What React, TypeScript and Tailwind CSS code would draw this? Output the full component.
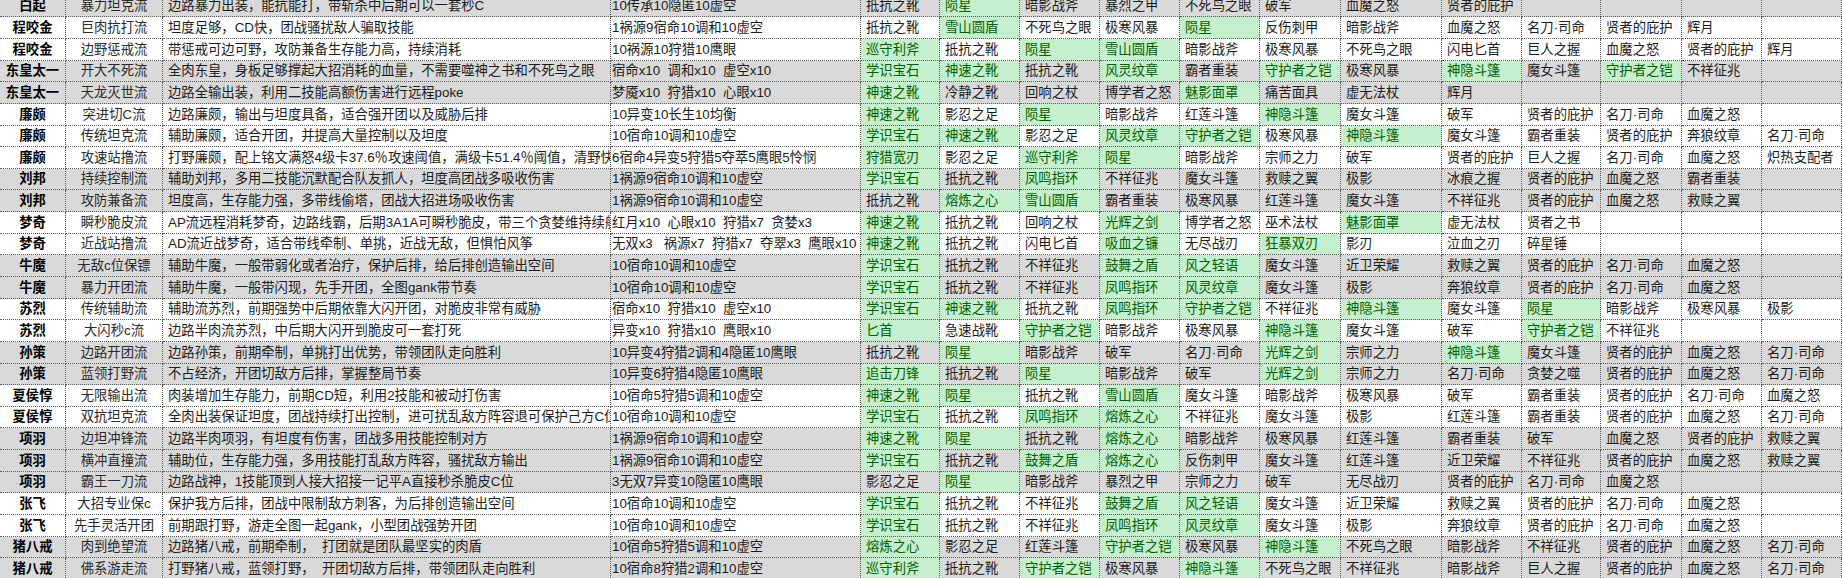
type Row = [string, string, string, string, string[]]

// items: a leading * marks the green "good" highlight
const rows: Row[] = [
  ['白起', '暴力坦克流', '边路暴力出装，能抗能打，带斩杀中后期可以一套秒C', '10传承10隐匿10虚空', ['抵抗之靴', '*陨星', '暗影战斧', '暴烈之甲', '不死鸟之眼', '破军', '血魔之怒', '贤者的庇护', '', '', '', '']],
  ['程咬金', '巨肉抗打流', '坦度足够，CD快，团战骚扰敌人骗取技能', '1祸源9宿命10调和10虚空', ['抵抗之靴', '*雪山圆盾', '不死鸟之眼', '极寒风暴', '*陨星', '反伤刺甲', '暗影战斧', '血魔之怒', '名刀·司命', '贤者的庇护', '辉月', '']],
  ['程咬金', '边野惩戒流', '带惩戒可边可野，攻防兼备生存能力高，持续消耗', '10祸源10狩猎10鹰眼', ['*巡守利斧', '抵抗之靴', '*陨星', '*雪山圆盾', '暗影战斧', '极寒风暴', '不死鸟之眼', '闪电匕首', '巨人之握', '血魔之怒', '贤者的庇护', '辉月']],
  ['东皇太一', '开大不死流', '全肉东皇，身板足够撑起大招消耗的血量，不需要噬神之书和不死鸟之眼', '宿命x10  调和x10  虚空x10', ['*学识宝石', '*神速之靴', '抵抗之靴', '*风灵纹章', '霸者重装', '*守护者之铠', '极寒风暴', '*神隐斗篷', '魔女斗篷', '*守护者之铠', '不祥征兆', '']],
  ['东皇太一', '天龙灭世流', '边路全输出装，利用二技能高额伤害进行远程poke', '梦魇x10  狩猎x10  心眼x10', ['*神速之靴', '冷静之靴', '回响之杖', '博学者之怒', '*魅影面罩', '痛苦面具', '虚无法杖', '辉月', '', '', '', '']],
  ['廉颇', '突进切C流', '边路廉颇，输出与坦度具备，适合强开团以及威胁后排', '10异变10长生10均衡', ['*神速之靴', '影忍之足', '*陨星', '暗影战斧', '红莲斗篷', '*神隐斗篷', '魔女斗篷', '破军', '贤者的庇护', '名刀·司命', '血魔之怒', '']],
  ['廉颇', '传统坦克流', '辅助廉颇，适合开团，并提高大量控制以及坦度', '10宿命10调和10虚空', ['*学识宝石', '*神速之靴', '影忍之足', '*风灵纹章', '*守护者之铠', '极寒风暴', '*神隐斗篷', '魔女斗篷', '霸者重装', '贤者的庇护', '奔狼纹章', '名刀·司命']],
  ['廉颇', '攻速站撸流', '打野廉颇，配上铭文满怒4级卡37.6％攻速阈值，满级卡51.4％阈值，清野快', '6宿命4异变5狩猎5夺萃5鹰眼5怜悯', ['*狩猎宽刃', '影忍之足', '*巡守利斧', '*陨星', '暗影战斧', '宗师之力', '破军', '贤者的庇护', '巨人之握', '名刀·司命', '血魔之怒', '炽热支配者']],
  ['刘邦', '持续控制流', '辅助刘邦，多用二技能沉默配合队友抓人，坦度高团战多吸收伤害', '1祸源9宿命10调和10虚空', ['*学识宝石', '抵抗之靴', '*凤鸣指环', '不祥征兆', '魔女斗篷', '救赎之翼', '极影', '冰痕之握', '贤者的庇护', '血魔之怒', '霸者重装', '']],
  ['刘邦', '攻防兼备流', '坦度高，生存能力强，多带线偷塔，团战大招进场吸收伤害', '1祸源9宿命10调和10虚空', ['抵抗之靴', '*熔炼之心', '*雪山圆盾', '霸者重装', '极寒风暴', '红莲斗篷', '魔女斗篷', '不祥征兆', '贤者的庇护', '血魔之怒', '救赎之翼', '']],
  ['梦奇', '瞬秒脆皮流', 'AP流远程消耗梦奇，边路线霸，后期3A1A可瞬秒脆皮，带三个贪婪维持续航', '红月x10  心眼x10  狩猎x7  贪婪x3', ['*神速之靴', '抵抗之靴', '回响之杖', '*光辉之剑', '博学者之怒', '巫术法杖', '*魅影面罩', '虚无法杖', '贤者之书', '', '', '']],
  ['梦奇', '近战站撸流', 'AD流近战梦奇，适合带线牵制、单挑，近战无敌，但惧怕风筝', '无双x3   祸源x7  狩猎x7  夺翠x3  鹰眼x10', ['*神速之靴', '抵抗之靴', '闪电匕首', '*吸血之镰', '无尽战刃', '*狂暴双刃', '影刃', '泣血之刃', '碎星锤', '', '', '']],
  ['牛魔', '无敌c位保镖', '辅助牛魔，一般带弱化或者治疗，保护后排，给后排创造输出空间', '10宿命10调和10虚空', ['*学识宝石', '抵抗之靴', '不祥征兆', '*鼓舞之盾', '*风之轻语', '魔女斗篷', '近卫荣耀', '救赎之翼', '贤者的庇护', '名刀·司命', '血魔之怒', '']],
  ['牛魔', '暴力开团流', '辅助牛魔，一般带闪现，先手开团，全图gank带节奏', '10宿命10调和10虚空', ['*学识宝石', '抵抗之靴', '不祥征兆', '*凤鸣指环', '*风灵纹章', '魔女斗篷', '极影', '奔狼纹章', '贤者的庇护', '名刀·司命', '血魔之怒', '']],
  ['苏烈', '传统辅助流', '辅助流苏烈，前期强势中后期依靠大闪开团，对脆皮非常有威胁', '宿命x10  狩猎x10  虚空x10', ['*学识宝石', '*神速之靴', '抵抗之靴', '*凤鸣指环', '*守护者之铠', '不祥征兆', '*神隐斗篷', '魔女斗篷', '*陨星', '暗影战斧', '极寒风暴', '极影']],
  ['苏烈', '大闪秒c流', '边路半肉流苏烈，中后期大闪开到脆皮可一套打死', '异变x10  狩猎x10  鹰眼x10', ['*匕首', '急速战靴', '*守护者之铠', '暗影战斧', '极寒风暴', '*神隐斗篷', '魔女斗篷', '破军', '*守护者之铠', '不祥征兆', '', '']],
  ['孙策', '边路开团流', '边路孙策，前期牵制，单挑打出优势，带领团队走向胜利', '10异变4狩猎2调和4隐匿10鹰眼', ['抵抗之靴', '*陨星', '暗影战斧', '破军', '名刀·司命', '*光辉之剑', '宗师之力', '*神隐斗篷', '魔女斗篷', '贤者的庇护', '血魔之怒', '名刀·司命']],
  ['孙策', '蓝领打野流', '不占经济，开团切敌方后排，掌握整局节奏', '10异变6狩猎4隐匿10鹰眼', ['*追击刀锋', '抵抗之靴', '*陨星', '暗影战斧', '破军', '*光辉之剑', '宗师之力', '名刀·司命', '贪婪之噬', '贤者的庇护', '血魔之怒', '名刀·司命']],
  ['夏侯惇', '无限输出流', '肉装增加生存能力，前期CD短，利用2技能和被动打伤害', '10宿命5狩猎5调和10虚空', ['*神速之靴', '*陨星', '抵抗之靴', '*雪山圆盾', '魔女斗篷', '暗影战斧', '极寒风暴', '破军', '霸者重装', '贤者的庇护', '名刀·司命', '血魔之怒']],
  ['夏侯惇', '双抗坦克流', '全肉出装保证坦度，团战持续打出控制，进可扰乱敌方阵容退可保护己方C位', '10宿命10调和10虚空', ['*学识宝石', '抵抗之靴', '*凤鸣指环', '*熔炼之心', '不祥征兆', '魔女斗篷', '极影', '红莲斗篷', '霸者重装', '贤者的庇护', '血魔之怒', '名刀·司命']],
  ['项羽', '边坦冲锋流', '边路半肉项羽，有坦度有伤害，团战多用技能控制对方', '1祸源9宿命10调和10虚空', ['*神速之靴', '*陨星', '抵抗之靴', '*熔炼之心', '暗影战斧', '极寒风暴', '红莲斗篷', '霸者重装', '破军', '血魔之怒', '贤者的庇护', '救赎之翼']],
  ['项羽', '横冲直撞流', '辅助位，生存能力强，多用技能打乱敌方阵容，骚扰敌方输出', '1祸源9宿命10调和10虚空', ['*学识宝石', '抵抗之靴', '*鼓舞之盾', '*熔炼之心', '反伤刺甲', '魔女斗篷', '红莲斗篷', '近卫荣耀', '不祥征兆', '贤者的庇护', '血魔之怒', '救赎之翼']],
  ['项羽', '霸王一刀流', '边路战神，1技能顶到人接大招接一记平A直接秒杀脆皮C位', '3无双7异变10隐匿10鹰眼', ['影忍之足', '*陨星', '暗影战斧', '暴烈之甲', '宗师之力', '破军', '无尽战刃', '贤者的庇护', '名刀·司命', '血魔之怒', '', '']],
  ['张飞', '大招专业保c', '保护我方后排，团战中限制敌方刺客，为后排创造输出空间', '10宿命10调和10虚空', ['*学识宝石', '抵抗之靴', '不祥征兆', '*鼓舞之盾', '*风之轻语', '魔女斗篷', '近卫荣耀', '救赎之翼', '贤者的庇护', '名刀·司命', '血魔之怒', '']],
  ['张飞', '先手灵活开团', '前期跟打野，游走全图一起gank，小型团战强势开团', '10宿命10调和10虚空', ['*学识宝石', '抵抗之靴', '不祥征兆', '*凤鸣指环', '*风灵纹章', '魔女斗篷', '极影', '奔狼纹章', '贤者的庇护', '名刀·司命', '血魔之怒', '']],
  ['猪八戒', '肉到绝望流', '边路猪八戒，前期牵制，  打团就是团队最坚实的肉盾', '10宿命5狩猎5调和10虚空', ['*熔炼之心', '影忍之足', '红莲斗篷', '*守护者之铠', '极寒风暴', '*神隐斗篷', '不死鸟之眼', '暗影战斧', '不祥征兆', '贤者的庇护', '血魔之怒', '名刀·司命']],
  ['猪八戒', '佛系游走流', '打野猪八戒，蓝领打野，  开团切敌方后排，带领团队走向胜利', '10宿命8狩猎2调和10虚空', ['*巡守利斧', '抵抗之靴', '*守护者之铠', '极寒风暴', '*神隐斗篷', '不死鸟之眼', '不祥征兆', '暗影战斧', '巨人之握', '贤者的庇护', '血魔之怒', '名刀·司命']],
]

const cell =
  'h-[21.65px] flex items-center overflow-hidden whitespace-pre border-r border-b border-dotted border-[#5a5a5a]'

export default function App() {
  let group = 0
  let prev = ''
  return (
    <div
      className="w-[1843px] h-[578px] overflow-hidden bg-white text-[13.33px] leading-none text-[#1c1c1c]"
      style={{ fontFamily: '"Liberation Sans", "Noto Sans CJK SC", sans-serif' }}
    >
      <div className="-mt-[4.35px] grid grid-cols-[66px_97px_448px_250px_79px_80px_80px_80px_80px_81px_101px_80px_79px_81px_80px_80px]">
        {rows.map((r, i) => {
          if (r[0] !== prev) {
            if (i > 0) group++
            prev = r[0]
          }
          const bg = group % 2 === 0 ? 'bg-[#d9d9d9]' : 'bg-white'
          return [
            <div key={i + 'a'} className={`${cell} ${bg} justify-center font-bold text-black`}>
              {r[0]}
            </div>,
            <div key={i + 'b'} className={`${cell} ${bg} justify-center text-[#2a2a2a]`}>
              {r[1]}
            </div>,
            <div key={i + 'c'} className={`${cell} ${bg} pl-[5px]`}>
              {r[2]}
            </div>,
            <div key={i + 'd'} className={`${cell} ${bg} pl-[1px]`}>
              {r[3]}
            </div>,
            ...r[4].map((it, j) => {
              const good = it.startsWith('*')
              return (
                <div
                  key={i + 'i' + j}
                  className={`${cell} pl-[5px] ${good ? 'bg-[#c6efce] text-[#006100]' : bg}`}
                >
                  {good ? it.slice(1) : it}
                </div>
              )
            }),
          ]
        })}
      </div>
    </div>
  )
}
